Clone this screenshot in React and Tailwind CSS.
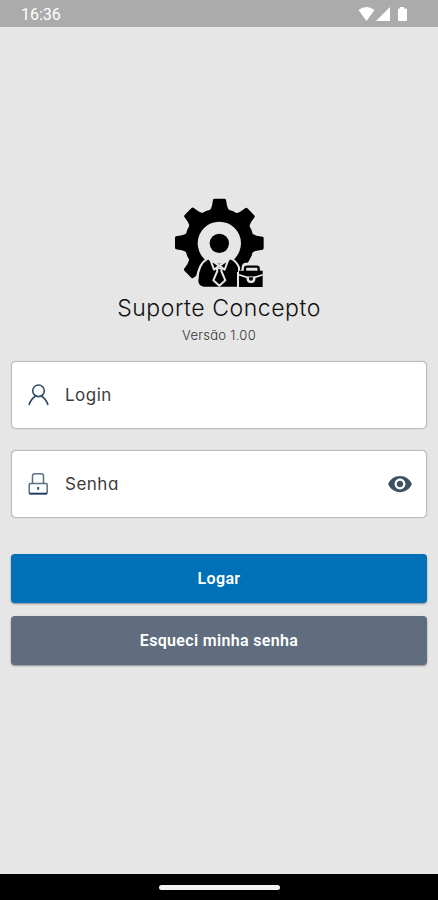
import React from 'react'

const TEETH = [0, 45, 90, 180, 225, 270, 315]

function Logo() {
  return (
    <svg width="110" height="105" viewBox="0 0 330 315" className="ml-px shrink-0" aria-hidden="true">
      <circle cx="163" cy="159" r="104" fill="#000" />
      {TEETH.map((angle) => (
        <path
          key={angle}
          d="M128 68Q139 58 141 47L144 29Q145 26 149 26H178Q182 26 183 29L186 47Q188 58 199 68L163 100Z"
          transform={`rotate(${angle} 163 159)`}
          fill="#000"
        />
      ))}
      {/* trims the gear below the jacket */}
      <path d="M92 315V270Q96 230 118 215H210L226 315Z" fill="#e6e6e6" />
      <circle cx="163" cy="160" r="65" fill="#e6e6e6" />
      <circle cx="163" cy="160" r="29" fill="#000" />
      {/* jacket */}
      <path
        d="M97 272Q98 222 129 205Q163 232 197 205Q215 214 222 232V293H116Q97 290 97 272Z"
        fill="#000"
        stroke="#e6e6e6"
        strokeWidth="6"
      />
      {/* collar wings and tie */}
      <g fill="#000" stroke="#e6e6e6" strokeWidth="6" strokeLinejoin="round">
        <path d="M155 235H171L169 243L181 271L163 287L145 271L157 243Z" />
        <path d="M136 209L162 227L147 239Z" />
        <path d="M190 209L164 227L179 239Z" />
      </g>
      {/* briefcase */}
      <path d="M216 315V246H230V230Q232 218 243 218H276Q288 218 290 232V246H304V315Z" fill="#e6e6e6" />
      <path d="M240 244V236Q240 230 246 230H275Q281 230 281 236V244" fill="none" stroke="#000" strokeWidth="7" />
      <path d="M222 291V242H293V291Z" fill="#000" />
      <path d="M222 254L246 262H270L293 254" fill="none" stroke="#e6e6e6" strokeWidth="5" />
      <path d="M245 260H271V269Q269 279 258 279Q247 279 245 269Z" fill="#e6e6e6" />
      <path d="M252 262H264V267Q263 272 258 272Q253 272 252 267Z" fill="#000" />
    </svg>
  )
}

function UserIcon() {
  return (
    <svg width="22" height="22" viewBox="0 0 22 22" fill="none" stroke="#2f4a66" strokeWidth="1.6" strokeLinecap="round">
      <circle cx="10.500" cy="6.800" r="5.800" />
      <path d="M1.200 20.500C2.200 17 4 14.500 7.500 12M19.800 20.500C18.800 17 17 14.500 13.500 12" />
    </svg>
  )
}

function LockIcon() {
  return (
    <svg width="22" height="22" viewBox="0 0 22 22" fill="none" stroke="#5b6f85" strokeWidth="1.5">
      <path d="M4.500 10.500V3Q4.500 0.800 6.800 0.800H13.200Q15.500 0.800 15.500 3V10.500" />
      <rect x="1.200" y="10.500" width="18" height="10.200" rx="1.200" />
      <path d="M1.500 20.600H19" stroke="#1f3f60" strokeWidth="1.800" />
      <path d="M10.200 14V16.800" stroke="#1f3f60" strokeWidth="1.800" />
    </svg>
  )
}

function EyeIcon() {
  return (
    <svg width="26" height="26" viewBox="0 0 24 24" fill="#3d5064">
      <path d="M12 4.500C7 4.500 2.730 7.610 1 12c1.730 4.390 6 7.500 11 7.500s9.270-3.110 11-7.500c-1.730-4.390-6-7.500-11-7.500zM12 17c-2.760 0-5-2.240-5-5s2.240-5 5-5 5 2.240 5 5-2.240 5-5 5zm0-8c-1.660 0-3 1.340-3 3s1.340 3 3 3 3-1.340 3-3-1.340-3-3-3z" />
    </svg>
  )
}

function StatusBar() {
  return (
    <header className="flex h-[27px] shrink-0 items-center justify-between bg-[#ababab] pl-[21px] pr-[30px] text-white">
      <span className="pt-0.5 font-['Roboto',sans-serif] text-base leading-5">16:36</span>
      <svg width="50" height="16" viewBox="0 0 50 16" fill="#fff">
        <path d="M0.500 4Q8.500 -2 16.500 4L8.500 15Z" />
        <path d="M32 1V15H18Z" />
        <path d="M42 1H46V2.500H48Q49 2.500 49 3.500V14Q49 15 48 15H41Q40 15 40 14V3.500Q40 2.500 41 2.500H42Z" />
      </svg>
    </header>
  )
}

function Field({ icon, label, action }) {
  return (
    <div className="flex h-[68px] items-center rounded-[5px] border border-[#b9bbbc] bg-white pl-4 pr-[13px] shadow-[0_0_1px_#aaa]">
      {icon}
      <span className="ml-[15px] grow font-['Inter',sans-serif] text-[17px] leading-6 tracking-[0.5px] text-[#3c3c3c] [font-feature-settings:'cv11']">
        {label}
      </span>
      {action}
    </div>
  )
}

export default function App() {
  return (
    <div className="flex h-[900px] w-[438px] flex-col overflow-hidden bg-[#e6e6e6]">
      <StatusBar />
      <main className="flex grow flex-col px-[11px] pt-[163px]">
        <div className="flex flex-col items-center">
          <Logo />
          <h1 className="-mt-0.5 whitespace-nowrap font-['Inter',sans-serif] text-[23px] font-light leading-[30px] tracking-[0.55px] text-[#111]">
            Suporte Concepto
          </h1>
          <p className="mt-0.5 font-['Inter',sans-serif] text-[13px] font-light leading-5 tracking-[0.3px] text-[#333] [font-feature-settings:'cv11']">
            Versão 1.00
          </p>
        </div>
        <div className="mt-4 flex flex-col gap-[21px]">
          <Field icon={<UserIcon />} label="Login" />
          <Field icon={<LockIcon />} label="Senha" action={<EyeIcon />} />
        </div>
        <div className="mt-9 flex flex-col gap-[13px] font-['Roboto',sans-serif] text-base font-semibold tracking-[0.33px] text-white">
          <button className="h-[49px] rounded bg-[#0070b9] shadow-[0_1px_2px_rgba(0,0,0,0.4)]">Logar</button>
          <button className="h-[49px] rounded bg-[#5f6d7e] shadow-[0_1px_2px_rgba(0,0,0,0.4)]">Esqueci minha senha</button>
        </div>
      </main>
      <footer className="flex h-[26px] shrink-0 items-center justify-center bg-black">
        <div className="h-[5px] w-[121px] rounded-full bg-[#f2f2f2]" />
      </footer>
    </div>
  )
}
